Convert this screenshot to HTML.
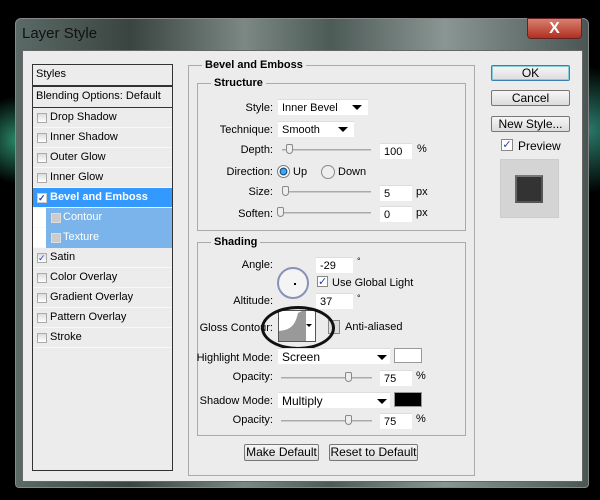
<!DOCTYPE html>
<html><head><style>
*{margin:0;padding:0;box-sizing:border-box}
body{width:600px;height:500px;background:#000;position:relative;overflow:hidden;font-family:"Liberation Sans",sans-serif;font-size:11px;color:#000}
.a{position:absolute}
.frame{left:15px;top:18px;width:574px;height:470px;border-radius:6px 6px 4px 4px;background:linear-gradient(90deg,#5a6a66,#3a4440 20%,#7b8884 40%,#4d5b57 55%,#8a9693 75%,#4a5653);border:1px solid #888}
.client{left:22px;top:50px;width:561px;height:432px;background:#ececec;border:1px solid #666}
.title{left:22px;top:25px;font-size:15px;color:#111}
.list{left:32px;top:64px;width:141px;height:407px;border:1px solid #333;background:#ececec}
.it{position:absolute;left:0;width:139px;height:20px;border-bottom:1px solid #f8f8f8;line-height:19px;padding-left:17px}
.cb{position:absolute;left:4px;top:5px;width:10px;height:10px;border:1px solid #aaa;background:linear-gradient(#ddd,#fff)}
.grp{border:1px solid #aaa;position:absolute}
.gl{position:absolute;background:#ececec;font-weight:bold;padding:0 3px}
.in{position:absolute;background:#fff;height:16px;line-height:16px;padding-left:4px;border-top:1px solid #ddd}
.lb{position:absolute;text-align:right;width:80px}
.sl{position:absolute;height:2px;background:#ccc;border-top:1px solid #aaa}
.th{position:absolute;width:7px;height:10px;border:1px solid #888;border-radius:2px 2px 4px 4px;background:#eee}
.btn{position:absolute;height:16px;border:1px solid #777;border-radius:2px;background:linear-gradient(#f6f6f6,#dcdcdc);text-align:center;line-height:14px;font-size:12px}
.arr{position:absolute;width:0;height:0;border-left:5px solid transparent;border-right:5px solid transparent;border-top:5px solid #000}
</style></head><body>
<div class="a" style="left:0;top:80px;width:18px;height:120px;background:radial-gradient(circle at 100% 50%,#2a8a6a,#000 70%)"></div>
<div class="a" style="left:588px;top:40px;width:12px;height:180px;background:radial-gradient(circle at 0% 50%,#2a7a6a,#000 70%)"></div>
<div class="a frame"></div>
<div class="a" style="left:527px;top:18px;width:55px;height:21px;border-radius:0 0 4px 4px;background:linear-gradient(#d88070,#b03020);border:1px solid #622;color:#fff;text-align:center;font-size:16px;font-weight:bold;line-height:19px">X</div>
<div class="a title">Layer Style</div>
<div class="a client"></div>

<div class="a list">
 <div class="it" style="top:0;padding-left:3px;border-bottom:2px solid #333;height:22px;line-height:19px">Styles</div>
 <div class="it" style="top:22px;padding-left:3px;height:21px;border-bottom:1px solid #333;line-height:19px">Blending Options: Default</div>
 <div class="it" style="top:43px"><span class="cb"></span>Drop Shadow</div>
 <div class="it" style="top:63px"><span class="cb"></span>Inner Shadow</div>
 <div class="it" style="top:83px"><span class="cb"></span>Outer Glow</div>
 <div class="it" style="top:103px"><span class="cb"></span>Inner Glow</div>
 <div class="it" style="top:123px;background:#3399ff;color:#fff;font-weight:bold"><span class="cb" style="border-color:#ccc;background:#fff;color:#24a;font-size:9px;line-height:8px">✓</span>Bevel and Emboss</div>
 <div class="it" style="top:143px;background:#fff;padding-left:30px;color:#fff"><span style="position:absolute;left:13px;top:0;width:126px;height:20px;background:#7ab4ea"></span><span class="cb" style="left:18px;background:#ccc;border-color:#ddd"></span><span style="position:relative">Contour</span></div>
 <div class="it" style="top:163px;background:#fff;padding-left:30px;color:#fff"><span style="position:absolute;left:13px;top:0;width:126px;height:20px;background:#7ab4ea"></span><span class="cb" style="left:18px;background:#ccc;border-color:#ddd"></span><span style="position:relative">Texture</span></div>
 <div class="it" style="top:183px"><span class="cb" style="color:#24a;font-size:9px;line-height:8px">✓</span>Satin</div>
 <div class="it" style="top:203px"><span class="cb"></span>Color Overlay</div>
 <div class="it" style="top:223px"><span class="cb"></span>Gradient Overlay</div>
 <div class="it" style="top:243px"><span class="cb"></span>Pattern Overlay</div>
 <div class="it" style="top:263px"><span class="cb"></span>Stroke</div>
</div>

<div class="grp" style="left:188px;top:65px;width:287px;height:411px"></div>
<div class="gl" style="left:202px;top:59px">Bevel and Emboss</div>
<div class="grp" style="left:197px;top:83px;width:269px;height:148px"></div>
<div class="gl" style="left:211px;top:77px">Structure</div>

<div class="lb" style="left:193px;top:102px">Style:</div>
<div class="in" style="left:278px;top:99px;width:90px">Inner Bevel</div><div class="arr" style="left:352px;top:105px"></div>
<div class="lb" style="left:193px;top:124px">Technique:</div>
<div class="in" style="left:278px;top:121px;width:76px">Smooth</div><div class="arr" style="left:338px;top:127px"></div>
<div class="lb" style="left:193px;top:144px">Depth:</div>
<div class="sl" style="left:282px;top:149px;width:89px"></div><div class="th" style="left:286px;top:144px"></div>
<div class="in" style="left:380px;top:143px;width:32px">100</div><div class="a" style="left:417px;top:143px">%</div>
<div class="lb" style="left:193px;top:166px">Direction:</div>
<div class="a" style="left:277px;top:165px;width:13px;height:13px;border-radius:50%;border:1px solid #777;background:radial-gradient(#3af 30%,#135 45%,#fff 55%)"></div><div class="a" style="left:293px;top:166px">Up</div>
<div class="a" style="left:321px;top:165px;width:14px;height:14px;border-radius:50%;border:1px solid #888;background:#eee"></div><div class="a" style="left:338px;top:166px">Down</div>
<div class="lb" style="left:193px;top:186px">Size:</div>
<div class="sl" style="left:282px;top:191px;width:89px"></div><div class="th" style="left:282px;top:186px"></div>
<div class="in" style="left:380px;top:185px;width:32px">5</div><div class="a" style="left:416px;top:186px">px</div>
<div class="lb" style="left:193px;top:208px">Soften:</div>
<div class="sl" style="left:280px;top:212px;width:91px"></div><div class="th" style="left:277px;top:207px"></div>
<div class="in" style="left:380px;top:206px;width:32px">0</div><div class="a" style="left:416px;top:207px">px</div>

<div class="grp" style="left:197px;top:242px;width:269px;height:194px"></div>
<div class="gl" style="left:211px;top:236px">Shading</div>
<div class="lb" style="left:193px;top:259px">Angle:</div>
<div class="in" style="left:316px;top:257px;width:37px">-29</div><div class="a" style="left:357px;top:256px;font-size:9px">°</div>
<div class="a" style="left:277px;top:267px;width:32px;height:32px;border-radius:50%;border:2px solid #8891b8;background:#f4f4f4"></div>
<div class="a" style="left:294px;top:283px;width:2px;height:2px;background:#000"></div>
<div class="a" style="left:317px;top:276px;width:11px;height:11px;border:1px solid #888;background:#fff;color:#24a;font-size:11px;line-height:10px;text-align:center">✓</div>
<div class="a" style="left:332px;top:277px">Use Global Light</div>
<div class="lb" style="left:193px;top:295px">Altitude:</div>
<div class="in" style="left:316px;top:293px;width:37px">37</div><div class="a" style="left:357px;top:293px;font-size:9px">°</div>
<div class="lb" style="left:193px;top:322px;width:80px">Gloss Contour:</div>
<div class="a" style="left:278px;top:310px;width:38px;height:32px;border:1px solid #555;background:#fff"></div>
<svg class="a" style="left:279px;top:311px" width="27" height="30"><path d="M0 30 L0 20 C10 19 16 16 19 2 L23 0 L27 0 L27 30Z" fill="#999"/></svg>
<div class="arr" style="left:306px;top:324px;border-width:3px 3px 0 3px"></div>
<div class="a" style="left:328px;top:320px;width:12px;height:14px;border:1px solid #888;background:#ddd"></div>
<div class="a" style="left:345px;top:321px">Anti-aliased</div>
<div class="a" style="left:261px;top:306px;width:74px;height:44px;border:3px solid #111;border-radius:50%"></div>
<div class="lb" style="left:193px;top:352px">Highlight Mode:</div>
<div class="in" style="left:278px;top:348px;width:112px;font-size:12px">Screen</div><div class="arr" style="left:377px;top:355px"></div>
<div class="a" style="left:394px;top:348px;width:28px;height:15px;border:1px solid #999;background:#fff"></div>
<div class="lb" style="left:193px;top:371px">Opacity:</div>
<div class="sl" style="left:281px;top:377px;width:91px"></div><div class="th" style="left:345px;top:372px"></div>
<div class="in" style="left:380px;top:370px;width:32px">75</div><div class="a" style="left:416px;top:370px">%</div>
<div class="lb" style="left:193px;top:395px">Shadow Mode:</div>
<div class="in" style="left:278px;top:392px;width:112px;font-size:12px">Multiply</div><div class="arr" style="left:377px;top:399px"></div>
<div class="a" style="left:394px;top:392px;width:28px;height:15px;border:1px solid #999;background:#000"></div>
<div class="lb" style="left:193px;top:414px">Opacity:</div>
<div class="sl" style="left:281px;top:420px;width:91px"></div><div class="th" style="left:345px;top:415px"></div>
<div class="in" style="left:380px;top:413px;width:32px">75</div><div class="a" style="left:416px;top:413px">%</div>

<div class="btn" style="left:244px;top:444px;width:75px;height:17px">Make Default</div>
<div class="btn" style="left:329px;top:444px;width:89px;height:17px">Reset to Default</div>

<div class="btn" style="left:491px;top:65px;width:79px;height:16px;border-color:#3c7fb1;box-shadow:inset 0 0 0 1px #8cd">OK</div>
<div class="btn" style="left:491px;top:90px;width:79px;height:16px">Cancel</div>
<div class="btn" style="left:491px;top:116px;width:79px;height:16px">New Style...</div>
<div class="a" style="left:501px;top:139px;width:12px;height:12px;border:1px solid #888;background:#fff;color:#24a;line-height:11px;text-align:center">✓</div>
<div class="a" style="left:518px;top:139px;font-size:12px">Preview</div>
<div class="a" style="left:500px;top:159px;width:59px;height:59px;background:#d4d4d4;border:1px solid #ccc"></div>
<div class="a" style="left:515px;top:175px;width:28px;height:28px;background:#333;border:2px solid #555;border-top-color:#777;border-left-color:#666"></div>
</body></html>
